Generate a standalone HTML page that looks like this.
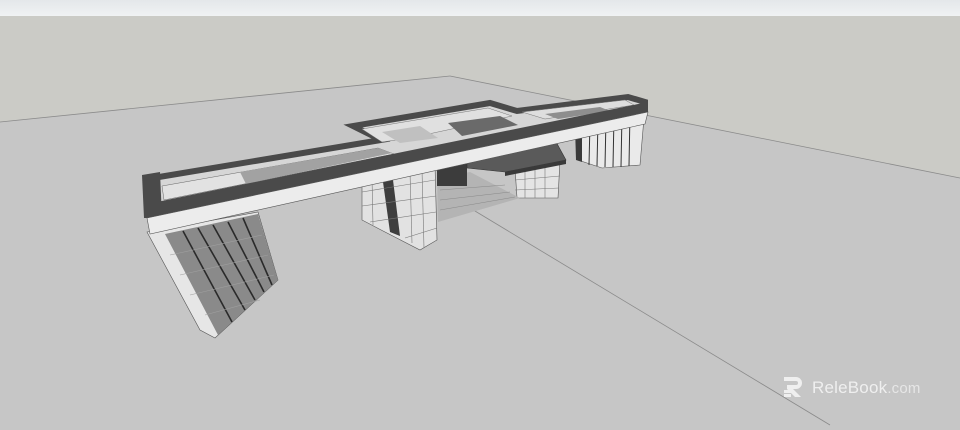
<!DOCTYPE html>
<html><head><meta charset="utf-8"><style>
html,body{margin:0;padding:0;width:960px;height:430px;overflow:hidden;background:#c6c6c6;font-family:"Liberation Sans",sans-serif}
svg{position:absolute;left:0;top:0}
.logo{position:absolute;left:812px;top:378px;color:#efefef;font-size:17px;letter-spacing:0.2px}
.logo span{font-size:15px;color:#e6e6e6}
</style></head><body>
<svg width="960" height="430" viewBox="0 0 960 430">
<defs><linearGradient id="top" x1="0" y1="0" x2="0" y2="1"><stop offset="0" stop-color="#e4e7ea"/><stop offset="1" stop-color="#f0f2f3"/></linearGradient></defs>
<rect x="0" y="0" width="960" height="430" fill="#c6c6c6"/>
<polygon points="0,16 960,16 960,178 450,76 0,122" fill="#cbcbc6"/>
<rect x="0" y="0" width="960" height="16" fill="url(#top)"/>
<line x1="0" y1="122" x2="450" y2="76" stroke="#8a8a8a" stroke-width="0.8"/>
<line x1="450" y1="76" x2="960" y2="178" stroke="#8a8a8a" stroke-width="0.8"/>
<line x1="470" y1="208" x2="830" y2="425" stroke="#8a8a8a" stroke-width="0.8"/>

<polygon points="578,122 645,106 640,165 602,168 578,160" fill="#eaeaea" stroke="#555" stroke-width="0.6"/>
<g stroke="#333" stroke-width="1">
<line x1="590" y1="122" x2="589" y2="165"/><line x1="598" y1="120" x2="597" y2="166"/><line x1="606" y1="118" x2="605" y2="167"/><line x1="614" y1="116" x2="613" y2="167"/><line x1="622" y1="114" x2="621" y2="167"/><line x1="630" y1="112" x2="629" y2="166"/>
</g>
<polygon points="575,126 582,124 582,162 576,160" fill="#3a3a3a"/>
<polygon points="515,168 560,160 558,198 517,198" fill="#e4e4e4" stroke="#555" stroke-width="0.6"/>
<g stroke="#777" stroke-width="0.6"><line x1="525" y1="167" x2="525" y2="198"/><line x1="535" y1="166" x2="535" y2="198"/><line x1="545" y1="164" x2="545" y2="198"/><line x1="515" y1="180" x2="560" y2="176"/><line x1="515" y1="190" x2="559" y2="188"/></g>
<polygon points="437,178 470,172 520,198 438,222" fill="#b4b4b4"/>
<g stroke="#888" stroke-width="0.5"><line x1="440" y1="190" x2="505" y2="185"/><line x1="440" y1="200" x2="510" y2="192"/><line x1="440" y1="210" x2="515" y2="197"/></g>
<rect x="437" y="158" width="30" height="28" fill="#3c3c3c"/>
<polygon points="467,153 555,140 566,160 505,172 467,168" fill="#5a5a5a" stroke="#333" stroke-width="0.6"/>
<polygon points="505,172 566,160 566,164 505,176" fill="#3a3a3a"/>
<polygon points="362,178 435,165 437,240 420,250 385,232 362,220" fill="#e2e2e2" stroke="#555" stroke-width="0.6"/>
<polygon points="383,182 393,180 400,236 390,232" fill="#3e3e3e"/>
<g stroke="#777" stroke-width="0.6"><line x1="362" y1="192" x2="435" y2="180"/><line x1="362" y1="206" x2="436" y2="196"/><line x1="370" y1="222" x2="436" y2="212"/><line x1="405" y1="238" x2="437" y2="228"/><line x1="372" y1="178" x2="373" y2="225"/><line x1="410" y1="172" x2="412" y2="243"/><line x1="422" y1="170" x2="424" y2="248"/></g>
<polygon points="147,232 258,212 278,280 215,338 200,330" fill="#e6e6e6" stroke="#555" stroke-width="0.6"/>
<polygon points="165,234 258,214 278,280 218,335" fill="#8a8a8a"/>
<g stroke="#2a2a2a" stroke-width="1.6"><line x1="183" y1="231" x2="232" y2="322"/><line x1="198" y1="228" x2="245" y2="310"/><line x1="213" y1="225" x2="255" y2="300"/><line x1="228" y1="222" x2="264" y2="292"/><line x1="243" y1="218" x2="272" y2="285"/></g>
<g stroke="#a0a0a0" stroke-width="0.6"><line x1="170" y1="255" x2="262" y2="235"/><line x1="180" y1="275" x2="268" y2="255"/><line x1="190" y1="295" x2="274" y2="275"/><line x1="205" y1="315" x2="260" y2="300"/></g>
<polygon points="147,179 381,140 353,126 490,103 517,111 628,97 645,102 645,108 147,212" fill="#d6d6d6" stroke="#4a4a4a" stroke-width="6" stroke-linejoin="miter"/>
<polygon points="162,186 378,148 394,154 164,200" fill="#e2e2e2" stroke="#666" stroke-width="0.5"/>
<polygon points="240,172 378,148 392,153 246,184" fill="#a2a2a2"/>
<polygon points="362,129 488,108 512,116 410,138 382,142" fill="#e0e0e0" stroke="#777" stroke-width="0.5"/>
<polygon points="382,132 420,126 438,138 400,143" fill="#c0c0c0"/>
<polygon points="448,123 500,116 518,125 462,136" fill="#6a6a6a"/>
<polygon points="522,112 625,100 634,105 545,119" fill="#dedede" stroke="#777" stroke-width="0.5"/>
<polygon points="545,114 600,107 610,111 558,119" fill="#8e8e8e"/>
<polygon points="147,204 648,102 648,112 147,218" fill="#4a4a4a"/>
<polygon points="142,175 160,172 162,218 144,218" fill="#4a4a4a"/>
<polygon points="147,218 648,112 645,124 150,234" fill="#ececec" stroke="#555" stroke-width="0.6"/>
</svg>
<svg width="960" height="430" style="pointer-events:none">
<g fill="#efefef"><path d="M784,377 h12 a6,6 0 0 1 0,12 h-3 l8,8 h-6 l-8,-8 v-4 h9 a2,2 0 0 0 0,-4 h-12 z"/><rect x="784" y="390" width="9" height="3"/><rect x="784" y="394" width="7" height="3"/></g>
</svg>
<div class="logo">ReleBook<span>.com</span></div>
</body></html>
